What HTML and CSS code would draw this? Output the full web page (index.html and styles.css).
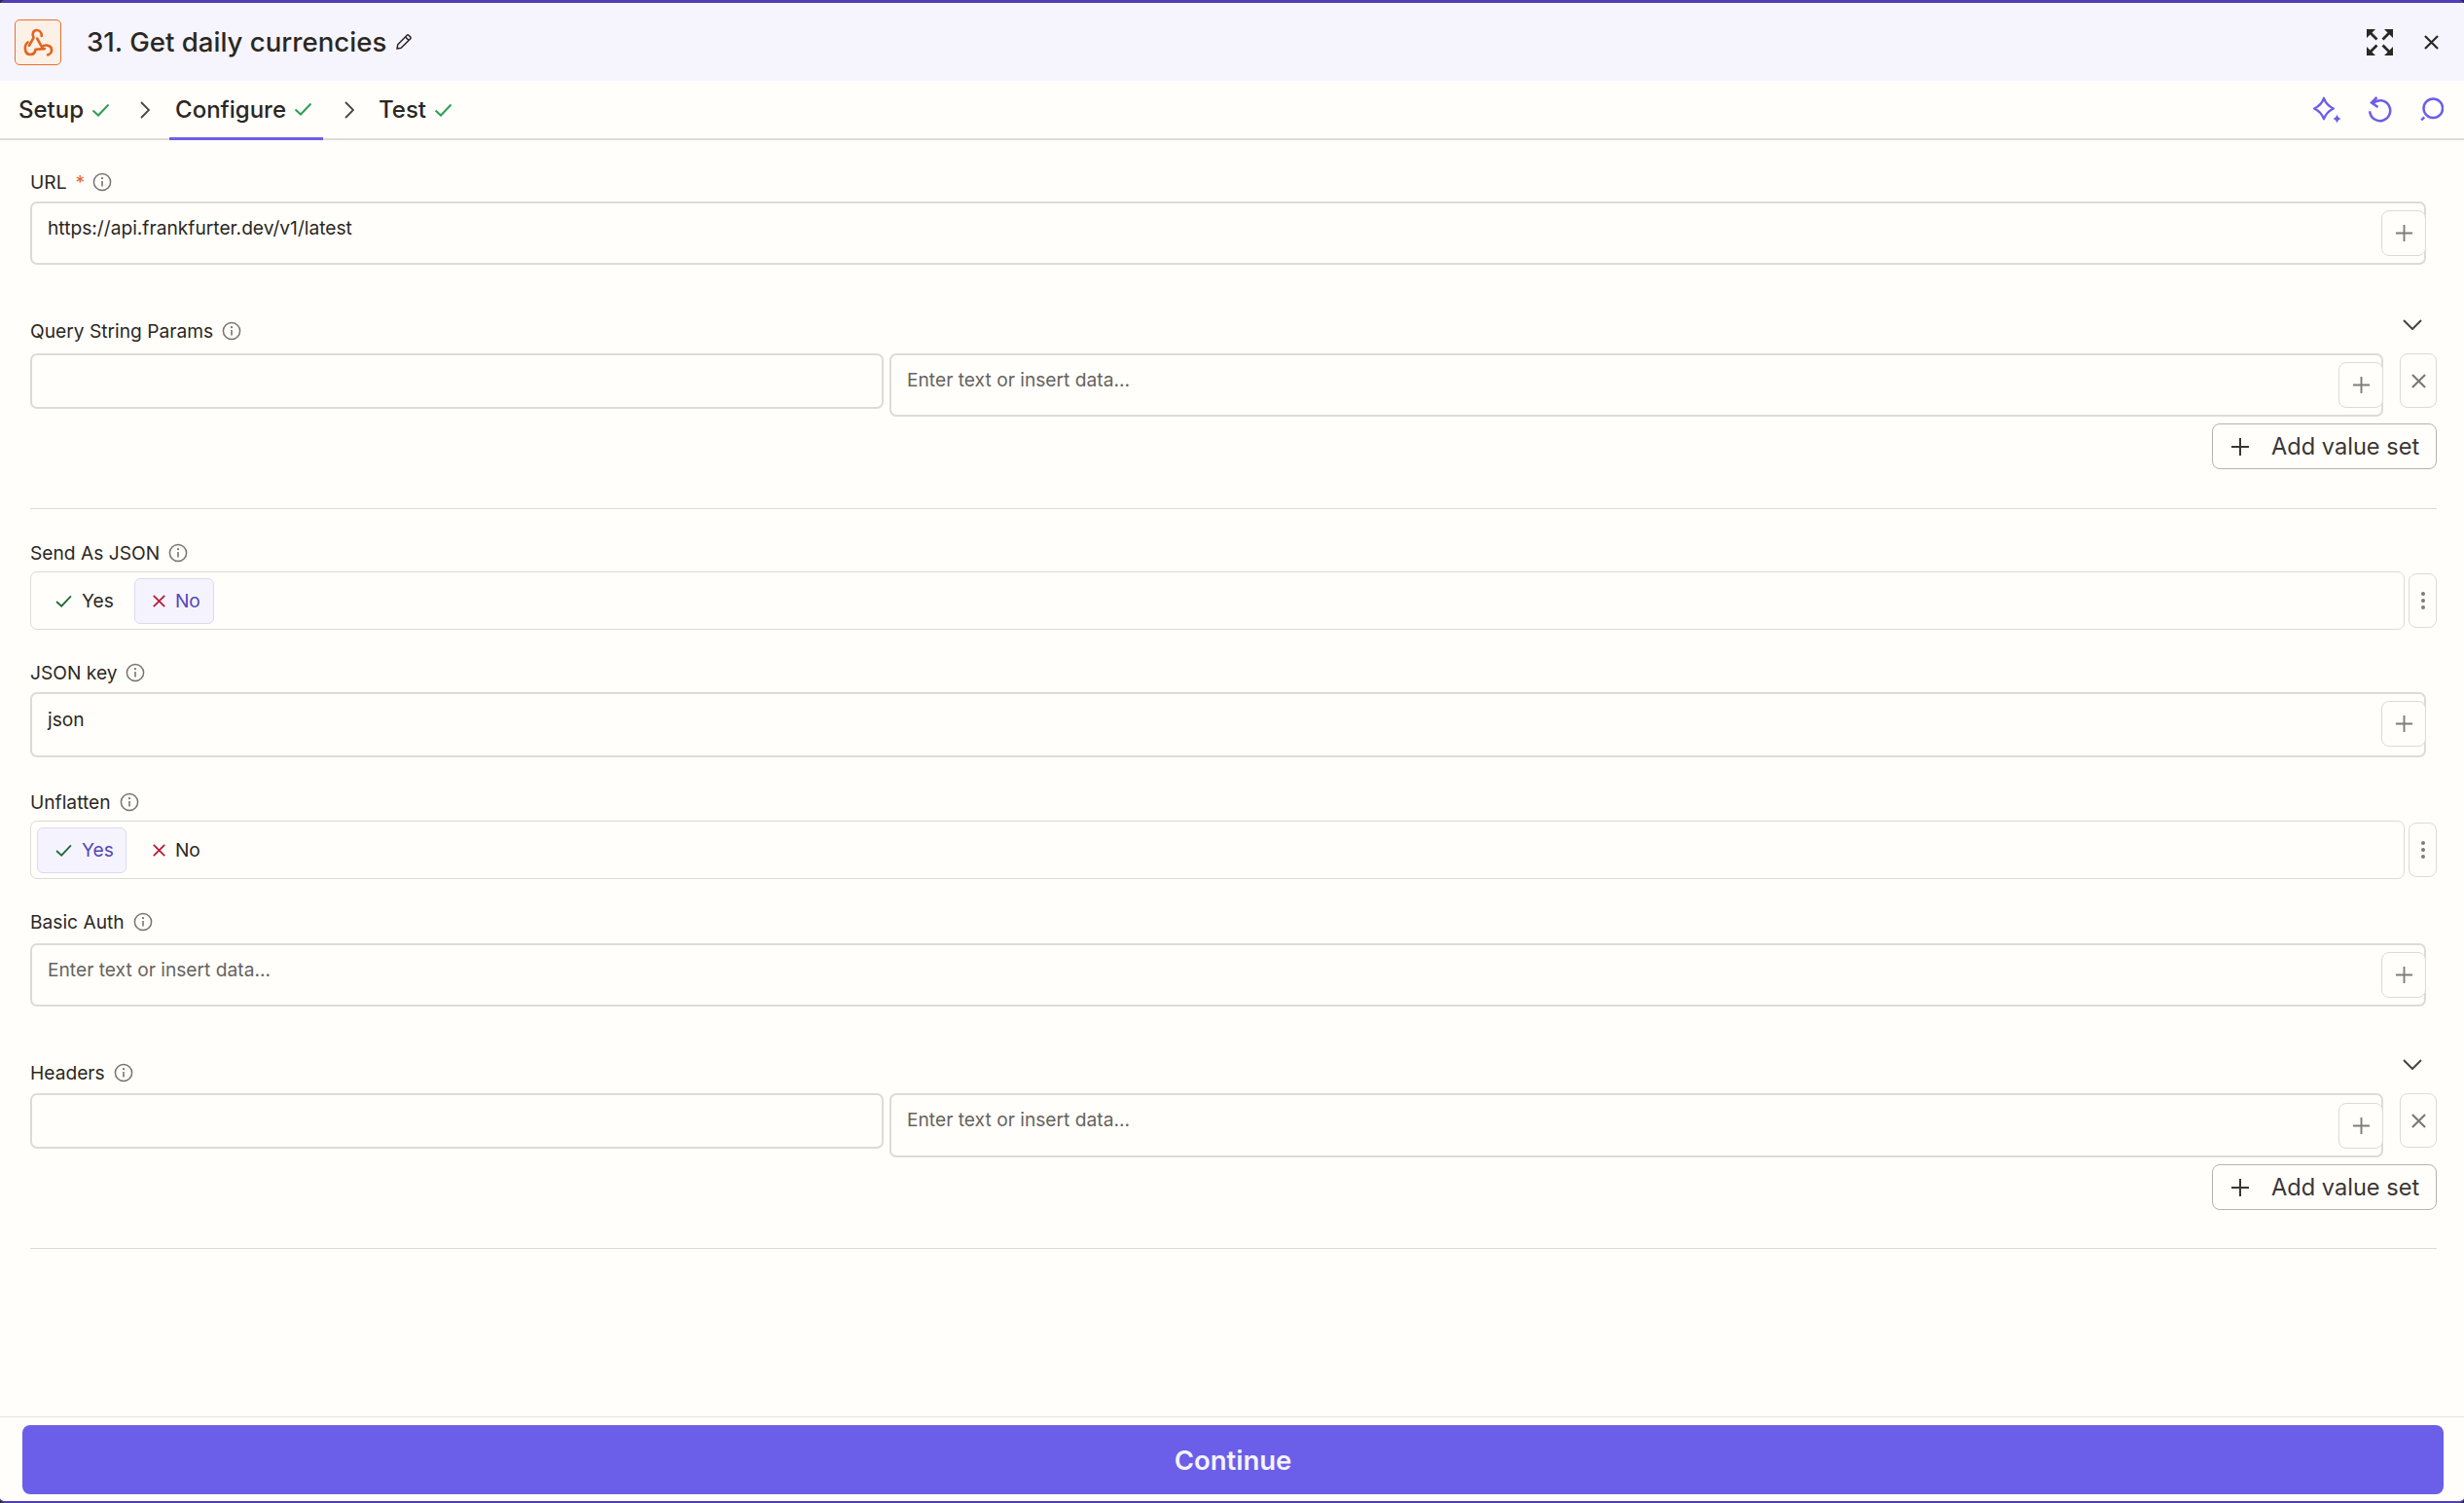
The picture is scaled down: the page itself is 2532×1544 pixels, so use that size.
FILE: index.html
```html
<html><head>
<title>Get daily currencies</title>
<link rel="stylesheet" href="styles.css">
</head>
<body>
<svg class="defs" width="0" height="0">
  <symbol id="info" viewBox="0 0 20 20"><circle cx="10" cy="10" r="8.6" fill="none" stroke="currentColor" stroke-width="1.5"/><path d="M10 9v5.4" fill="none" stroke="currentColor" stroke-width="1.6"/><circle cx="10" cy="6.2" r="1.1" fill="currentColor"/></symbol>
  <symbol id="plus" viewBox="0 0 20 20"><path d="M10 1v18M1 10h18" fill="none" stroke="currentColor" stroke-width="2"/></symbol>
  <symbol id="cross" viewBox="0 0 16 16"><path d="M1 1l14 14M15 1L1 15" fill="none" stroke="currentColor" stroke-width="2.300"/></symbol>
  <symbol id="check" viewBox="0 0 18 14"><path d="M1 7.500l5.500 5L17 1.500" fill="none" stroke="currentColor" stroke-width="2"/></symbol>
  <symbol id="chev" viewBox="0 0 10 18"><path d="M1 1l8 8-8 8" fill="none" stroke="currentColor" stroke-width="1.800"/></symbol>
  <symbol id="chevdown" viewBox="0 0 20 11"><path d="M1 1l9 9 9-9" fill="none" stroke="currentColor" stroke-width="2"/></symbol>
</svg>

<div class="modal">
  <div class="header">
    <div class="app-icon">
      <svg width="37" height="33" viewBox="62 80 110 100" fill="none" stroke="#e2651f" stroke-width="8" stroke-linecap="round" stroke-linejoin="round"><path d="M127 110C127 96 117 92 112 92C100 92 96 104 102 115L88 140"/><path d="M84 130C72 138 72 168 92 168C103 168 107 160 108 152L136 150"/><path d="M113 118L128 145C136 135 158 138 158 154C158 162 152 168 146 169"/></svg>
    </div>
    <div class="title">31. Get daily currencies</div>
    <svg class="pencil" width="18" height="18" viewBox="0 0 18 18" fill="none" stroke="#2b2723" stroke-width="1.500" stroke-linejoin="round"><path d="M2 16l.8-4.200L12.200 2.200a1.200 1.200 0 0 1 1.700 0l1.900 1.900a1.200 1.200 0 0 1 0 1.700L6.200 15.200z"/><path d="M10.600 4l3.400 3.400"/></svg>
    <div class="spacer"></div>
    <svg class="expand" width="27" height="27" viewBox="0 0 27 27" fill="#2b2723" stroke="#2b2723" stroke-width="2.800"><path d="M0 0h9L0 9zM27 0h-9l9 9zM0 27h9l-9-9zM27 27h-9l9-9z" stroke="none"/><path d="M3 3l7.500 7.500M24 3l-7.500 7.500M3 24l7.500-7.500M24 24l-7.500-7.500" fill="none"/></svg>
    <svg class="close" width="15" height="15"><use href="#cross"/></svg>
  </div>

  <div class="tabs">
    <div class="tab">Setup <svg class="tick" width="19" height="14"><use href="#check"/></svg></div>
    <svg class="tab-sep first-sep" width="10" height="18"><use href="#chev"/></svg>
    <div class="tab active">Configure <svg class="tick" width="19" height="14"><use href="#check"/></svg></div>
    <svg class="tab-sep second-sep" width="10" height="18"><use href="#chev"/></svg>
    <div class="tab">Test <svg class="tick" width="19" height="14"><use href="#check"/></svg></div>
    <div class="spacer"></div>
    <div class="tools">
      <svg class="tool-spark" width="29" height="28" viewBox="0 0 29 28" fill="none" stroke="#6b5ee8" stroke-width="2.400" stroke-linejoin="round"><path d="M11 1.800c1.500 4.500 4.500 8 9.800 10.700-5.300 2.700-8.300 6.200-9.800 10.700-1.500-4.500-4.500-8-9.800-10.700 5.300-2.700 8.300-6.200 9.800-10.700z"/><path d="M24.500 18.500c.5 2.200 1.800 3.800 4 4.500-2.200.7-3.500 2.300-4 4.500-.5-2.200-1.800-3.800-4-4.500 2.200-.7 3.500-2.300 4-4.500z" fill="#6b5ee8" stroke="none"/></svg>
      <svg class="tool-undo" width="24" height="28" viewBox="0 0 24 28" fill="none" stroke="#6b5ee8" stroke-width="2.500"><path d="M4.500 7a10.500 10.500 0 1 1-3.300 8.300"/><path d="M8.500 1L3 6.500l6.500 4.500"/></svg>
      <svg width="24" height="25" viewBox="0 0 24 25" fill="none" stroke="#6b5ee8" stroke-width="2.500"><circle cx="13.300" cy="11.300" r="9.800"/><path d="M4.300 20.300l-3.100 3"/></svg>
    </div>
  </div>

  <div class="form">
    <div class="field first inset">
      <div class="label">URL <span class="req">*</span> <svg class="info" width="20" height="20"><use href="#info"/></svg></div>
      <div class="input">https://api.frankfurter.dev/v1/latest
        <span class="add-btn"><svg width="19" height="19"><use href="#plus"/></svg></span>
      </div>
    </div>

    <div class="group">
      <div class="label with-chev"><span class="label-text">Query String Params <svg class="info" width="20" height="20"><use href="#info"/></svg></span>
        <svg class="chevdown" width="20" height="11"><use href="#chevdown"/></svg></div>
      <div class="pair">
        <div class="key-input"></div>
        <div class="input value-input placeholder">Enter text or insert data...
          <span class="add-btn"><svg width="19" height="19"><use href="#plus"/></svg></span>
        </div>
        <div class="remove"><svg width="15" height="15"><use href="#cross"/></svg></div>
      </div>
      <div class="add-row"><div class="add-set"><svg width="20" height="20"><use href="#plus"/></svg>Add value set</div></div>
      <div class="divider"></div>
    </div>

    <div class="field after-divider">
      <div class="label tight">Send As JSON <svg class="info" width="20" height="20"><use href="#info"/></svg></div>
      <div class="toggle-row">
        <div class="toggle">
          <div class="opt yes"><svg width="17" height="13" class="c-yes"><use href="#check"/></svg>Yes</div>
          <div class="opt no on"><svg width="13" height="13" class="c-no"><use href="#cross"/></svg>No</div>
        </div>
        <div class="more"><i></i><i></i><i></i></div>
      </div>
    </div>

    <div class="field inset">
      <div class="label">JSON key <svg class="info" width="20" height="20"><use href="#info"/></svg></div>
      <div class="input tall">json
        <span class="add-btn"><svg width="19" height="19"><use href="#plus"/></svg></span>
      </div>
    </div>

    <div class="field unflatten">
      <div class="label tight">Unflatten <svg class="info" width="20" height="20"><use href="#info"/></svg></div>
      <div class="toggle-row">
        <div class="toggle">
          <div class="opt yes on"><svg width="17" height="13" class="c-yes"><use href="#check"/></svg>Yes</div>
          <div class="opt no"><svg width="13" height="13" class="c-no"><use href="#cross"/></svg>No</div>
        </div>
        <div class="more"><i></i><i></i><i></i></div>
      </div>
    </div>

    <div class="field inset">
      <div class="label wide">Basic Auth <svg class="info" width="20" height="20"><use href="#info"/></svg></div>
      <div class="input placeholder">Enter text or insert data...
        <span class="add-btn"><svg width="19" height="19"><use href="#plus"/></svg></span>
      </div>
    </div>

    <div class="group headers">
      <div class="label with-chev"><span class="label-text">Headers <svg class="info" width="20" height="20"><use href="#info"/></svg></span>
        <svg class="chevdown" width="20" height="11"><use href="#chevdown"/></svg></div>
      <div class="pair">
        <div class="key-input"></div>
        <div class="input value-input placeholder">Enter text or insert data...
          <span class="add-btn"><svg width="19" height="19"><use href="#plus"/></svg></span>
        </div>
        <div class="remove"><svg width="15" height="15"><use href="#cross"/></svg></div>
      </div>
      <div class="add-row"><div class="add-set"><svg width="20" height="20"><use href="#plus"/></svg>Add value set</div></div>
      <div class="divider"></div>
    </div>
  </div>

  <div class="footer">
    <div class="continue">Continue</div>
  </div>
</div>
</body></html>
```
FILE: styles.css
```css
* {
  box-sizing: border-box;
}

html, body {
  margin: 0;
  padding: 0;
  height: 100%;
  background-color: #2a2740;
  font-family: Inter, "Noto Sans", sans-serif;
  color: #2b2723;
  overflow: hidden;
}

.defs {
  position: absolute;
}

.modal {
  height: 1544px;
  display: flex;
  flex-direction: column;
  background-color: #fffefb;
  border-top: 3px solid #4f3fb5;
  border-bottom: 2px solid #4f3fb5;
  border-radius: 5px;
}

.spacer {
  flex: 1;
}

.header {
  height: 80px;
  display: flex;
  align-items: center;
  padding: 0 26px 0 15px;
  background-color: #f6f5fe;
}

.app-icon {
  width: 48px;
  height: 47px;
  display: flex;
  align-items: center;
  justify-content: center;
  background-color: #fdf0e6;
  border: 1px solid #e8702e;
  border-radius: 5px;
}

.title {
  margin-left: 26px;
  font-size: 27.6px;
  font-weight: 500;
}

.pencil {
  margin-left: 9px;
}

.expand {
  margin-right: 32px;
}

.close {
  color: #2b2723;
}

.tabs {
  height: 61px;
  display: flex;
  align-items: stretch;
  padding: 0 21px 0 19px;
  border-bottom: 2px solid #dcdbd6;
}

.tab {
  display: flex;
  align-items: center;
  gap: 8px;
  font-size: 24px;
  font-weight: 500;
  color: #2b2723;
}

.tab.active {
  margin: 0 0 -2px 0;
  padding: 0 11px 0 6px;
  border-bottom: 3px solid #6b5ee8;
}

.tick {
  color: #2f9e55;
}

.tab-sep {
  align-self: center;
  color: #444;
}

.first-sep {
  margin: 0 20px 0 31px;
}

.second-sep {
  margin: 0 25px 0 22px;
}

.tools {
  display: flex;
  align-items: center;
}

.tool-spark {
  margin-right: 28px;
}

.tool-undo {
  margin-right: 29px;
}

.form {
  flex: 1;
  padding: 0 28px 0 31px;
}

.field {
  margin-top: 32px;
}

.field.first {
  margin-top: 31px;
}

.field.inset {
  margin-right: 11px;
}

.field.after-divider {
  margin-top: 33px;
}

.field.unflatten {
  margin-top: 34px;
}

.label {
  height: 24px;
  display: flex;
  align-items: center;
  gap: 9px;
  margin-bottom: 8px;
  font-size: 19.2px;
  font-weight: 400;
  white-space: nowrap;
}

.label.tight {
  margin-bottom: 7px;
}

.label.wide {
  margin-bottom: 10px;
}

.label-text {
  display: flex;
  align-items: center;
  gap: 9px;
}

.with-chev {
  justify-content: space-between;
  margin-bottom: 11px;
  padding-right: 15px;
}

.chevdown {
  color: #444;
  margin-top: -14px;
}

.req {
  color: #e8652a;
  margin: 0 -1px 0 0;
}

.info {
  color: #77746f;
}

.input {
  position: relative;
  height: 65px;
  padding: 14px 16px;
  border: 2px solid #dcdbd6;
  border-radius: 7px;
  font-size: 19.2px;
  line-height: 22px;
  background-color: #fffefb;
}

.input.tall {
  height: 67px;
  padding-top: 15px;
}

.placeholder {
  color: #66635e;
}

.add-btn {
  position: absolute;
  top: 7px;
  right: -2px;
  width: 46px;
  height: 47px;
  display: flex;
  align-items: center;
  justify-content: center;
  border: 1px solid #dcdbd6;
  border-radius: 8px;
  background-color: #fffefb;
  color: #807d78;
}

.group {
  margin-top: 56px;
}

.headers .with-chev {
  margin-bottom: 9px;
}

.headers .chevdown {
  margin-top: -18px;
}

.headers .value-input {
  height: 66px;
}

.headers .add-btn {
  top: 8px;
}

.headers .divider {
  margin-top: 39px;
}

.pair {
  display: flex;
  align-items: flex-start;
}

.key-input {
  width: 877px;
  height: 57px;
  border: 2px solid #dcdbd6;
  border-radius: 7px;
}

.value-input {
  width: 1535px;
  margin-left: 6px;
}

.remove {
  width: 38px;
  height: 56px;
  margin-left: 17px;
  display: flex;
  align-items: center;
  justify-content: center;
  border: 1px solid #dcdbd6;
  border-radius: 8px;
  color: #7c7974;
}

.add-row {
  display: flex;
  justify-content: flex-end;
  margin-top: 7px;
}

.add-set {
  width: 231px;
  height: 47px;
  display: flex;
  align-items: center;
  gap: 22px;
  padding-left: 18px;
  border: 1px solid #b5b3ae;
  border-radius: 8px;
  font-size: 23.6px;
  color: #3a3633;
}

.divider {
  height: 1px;
  margin-top: 40px;
  background-color: #dcdbd6;
}

.toggle-row {
  display: flex;
  align-items: center;
  gap: 4px;
}

.toggle {
  width: 2440px;
  height: 60px;
  display: flex;
  align-items: center;
  gap: 8px;
  padding-left: 6px;
  border: 1px solid #dcdbd6;
  border-radius: 7px;
}

.opt {
  height: 47px;
  display: flex;
  align-items: center;
  gap: 10px;
  padding: 0 12px 0 18px;
  border: 1px solid transparent;
  border-radius: 6px;
  font-size: 19.2px;
}

.opt.no {
  padding-right: 13px;
}

.opt.on {
  background-color: #f5f4fe;
  border-color: #dcd9f6;
  color: #5546b8;
}

.c-yes {
  color: #1f6b3a;
}

.c-no {
  color: #b3203c;
}

.more {
  width: 29px;
  height: 56px;
  display: flex;
  flex-direction: column;
  align-items: center;
  justify-content: center;
  gap: 3px;
  border: 1px solid #dcdbd6;
  border-radius: 8px;
}

.more i {
  width: 4px;
  height: 4px;
  border-radius: 50%;
  background-color: #807d78;
}

.footer {
  height: 87px;
  padding: 8px 21px 0 23px;
  border-top: 1px solid #e4e3df;
}

.continue {
  height: 71px;
  display: flex;
  align-items: center;
  justify-content: center;
  background-color: #6b5ee8;
  border-radius: 8px;
  color: #f4f3fe;
  font-size: 27.5px;
  font-weight: 600;
}
```
